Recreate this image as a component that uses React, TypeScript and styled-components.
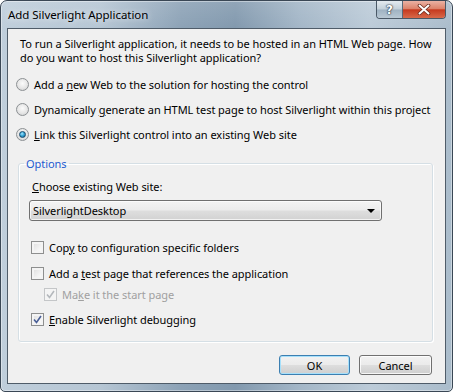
import React from "react";
import styled, { createGlobalStyle } from "styled-components";

const FONT = `"Noto Sans", "Open Sans", sans-serif`;

const GlobalStyle = createGlobalStyle`
  html, body {
    margin: 0;
    padding: 0;
    background: #ffffff;
  }
  body {
    font-family: ${FONT};
    font-size: 11px;
    letter-spacing: -0.05px;
    color: #000;
    white-space: nowrap;
  }
`;

const Window = styled.div`
  width: 453px;
  height: 392px;
  box-sizing: border-box;
  border: 1px solid #3a4755;
  border-radius: 7px 7px 5px 5px;
  background:
    linear-gradient(180deg, rgba(255,255,255,0.12) 0px, rgba(255,255,255,0) 28px),
    linear-gradient(90deg, #bfcedb 0%, #b6c6d4 22%, #8ca2b6 40%, #8299ae 52%, #a3b6c7 66%, #bccbd8 82%, #aabccb 100%);
  display: flex;
  flex-direction: column;
  overflow: hidden;
  box-shadow: inset 0 0 0 1px rgba(255,255,255,0.4);
`;

const TitleBar = styled.div`
  height: 27px;
  display: flex;
  align-items: flex-start;
  padding-left: 7px;
`;

const TitleText = styled.div`
  margin-top: 6px;
  line-height: 15px;
  font-size: 11.5px;
  color: #000;
  text-shadow: 0 0 6px rgba(255,255,255,0.9);
`;

const CaptionGroup = styled.div`
  display: flex;
  margin-left: auto;
  margin-right: 6px;
  height: 17px;
  border: 1px solid #4a5866;
  border-top: none;
  border-radius: 0 0 4px 4px;
  overflow: hidden;
`;

const HelpButton = styled.div`
  width: 25px;
  display: flex;
  align-items: center;
  justify-content: center;
  border-right: 1px solid #5b6977;
  background: linear-gradient(180deg, #e4eaef 0%, #c3d0da 48%, #9fb2c2 52%, #b9c8d4 100%);
  color: #fff;
  font-family: "DejaVu Sans", sans-serif;
  font-weight: bold;
  font-size: 12px;
  line-height: 1;
  text-shadow: 0 0 1px #2e3b48, 0 0 1px #2e3b48, 0 0 2px #2e3b48;
`;

const CloseButton = styled.div`
  width: 42px;
  display: flex;
  align-items: center;
  justify-content: center;
  background: linear-gradient(180deg, #eab2a4 0%, #dc836b 45%, #c63a1f 52%, #d8694a 100%);
`;

const Client = styled.div`
  flex: 1;
  margin: 0 6px 7px 6px;
  box-sizing: border-box;
  border: 1px solid #4f5c69;
  background: #f0f0f0;
  display: flex;
  flex-direction: column;
`;

const Intro = styled.div`
  padding: 8px 12px 0 12px;
  line-height: 14px;
`;

const OptionList = styled.div`
  margin-top: 7px;
  padding-left: 8px;
  display: flex;
  flex-direction: column;
`;

const RadioRow = styled.div`
  height: 25px;
  display: flex;
  align-items: center;
  gap: 5px;
`;

const Radio = styled.span<{ $checked?: boolean }>`
  width: 13px;
  height: 13px;
  box-sizing: border-box;
  border-radius: 50%;
  border: 1px solid #8c9093;
  background: radial-gradient(circle at 50% 40%, #fbfbfb 0%, #e6e6e6 55%, #c9cacb 100%);
  display: flex;
  align-items: center;
  justify-content: center;
  flex-shrink: 0;

  &::after {
    content: "";
    display: ${p => (p.$checked ? "block" : "none")};
    width: 5px;
    height: 5px;
    border-radius: 50%;
    border: 1px solid #184a6c;
    background: radial-gradient(circle at 40% 35%, #a8e6ff 0%, #3aa8d8 45%, #0b5b8c 100%);
  }
`;

const Key = styled.span`
  text-decoration: underline;
`;

const Group = styled.fieldset`
  margin: 9px 12px 0 10px;
  padding: 0;
  height: 186px;
  box-sizing: border-box;
  border: 1px solid #d5dfe5;
  border-radius: 3px;
  box-shadow: inset 1px 1px 0 #ffffff, 1px 1px 0 #ffffff;
  min-width: 0;
`;

const Legend = styled.legend`
  margin-left: 5px;
  padding: 0 2px;
  line-height: 15px;
  color: #1c5bd1;
`;

const GroupBody = styled.div`
  padding-left: 10px;
  display: flex;
  flex-direction: column;
`;

const FieldLabel = styled.div`
  margin-top: 8px;
  margin-left: 3px;
  line-height: 15px;
`;

const Combo = styled.div`
  margin-top: 6px;
  width: 353px;
  height: 21px;
  box-sizing: border-box;
  border: 1px solid #707070;
  border-radius: 3px;
  background: linear-gradient(180deg, #f4f4f4 0%, #ececec 48%, #dedede 52%, #d2d2d2 100%);
  box-shadow: inset 0 0 0 1px rgba(255,255,255,0.7);
  display: flex;
  align-items: center;
  padding: 0 6px 0 3px;
`;

const ComboText = styled.span`
  flex: 1;
`;

const Arrow = styled.span`
  width: 0;
  height: 0;
  border-left: 4px solid transparent;
  border-right: 4px solid transparent;
  border-top: 4px solid #000;
`;

const CheckRow = styled.div<{ $top: number; $indent?: number; $disabled?: boolean }>`
  margin-top: ${p => p.$top}px;
  margin-left: ${p => 2 + (p.$indent || 0)}px;
  height: 20px;
  display: flex;
  align-items: center;
  gap: 5px;
  color: ${p => (p.$disabled ? "#a0a0a0" : "#000")};
`;

const Box = styled.span<{ $disabled?: boolean }>`
  width: 13px;
  height: 13px;
  box-sizing: border-box;
  border: 1px solid ${p => (p.$disabled ? "#c4c6c8" : "#8e8f8f")};
  background: ${p => (p.$disabled ? "#f4f4f4" : "linear-gradient(135deg, #dcdcdc 0%, #f6f6f6 70%, #ffffff 100%)")};
  box-shadow: inset 0 0 0 2px #f4f4f4;
  display: flex;
  align-items: center;
  justify-content: center;
  flex-shrink: 0;
`;

const Footer = styled.div`
  margin-top: 13px;
  padding-right: 13px;
  display: flex;
  justify-content: flex-end;
  gap: 9px;
`;

const Button = styled.div<{ $default?: boolean; $w: number }>`
  width: ${p => p.$w}px;
  height: 20px;
  box-sizing: border-box;
  border: 1px solid ${p => (p.$default ? "#3c7fb1" : "#707070")};
  border-radius: 3px;
  background: linear-gradient(180deg, #f2f2f2 0%, #ebebeb 48%, #dddddd 52%, #cfcfcf 100%);
  box-shadow: inset 0 0 0 1px ${p => (p.$default ? "#a6e0fb" : "rgba(255,255,255,0.8)")};
  display: flex;
  align-items: center;
  justify-content: center;
  line-height: 1;
`;

const Check = ({ disabled }: { disabled?: boolean }) => (
  <svg width="9" height="9" viewBox="0 0 9 9">
    <path
      d="M1 4.5 L3.5 7.5 L8 1"
      fill="none"
      stroke={disabled ? "#b4b8bc" : "#4a5f97"}
      strokeWidth="1.6"
    />
  </svg>
);

const CloseGlyph = () => (
  <svg width="14" height="11" viewBox="0 0 14 11">
    <path d="M2.5 1.5 L11.5 9.5 M11.5 1.5 L2.5 9.5" stroke="#6b2a1c" strokeWidth="3.6" strokeLinecap="round" />
    <path d="M2.5 1.5 L11.5 9.5 M11.5 1.5 L2.5 9.5" stroke="#ffffff" strokeWidth="2" strokeLinecap="round" />
  </svg>
);

export default function App() {
  return (
    <>
      <GlobalStyle />
      <Window>
        <TitleBar>
          <TitleText>Add Silverlight Application</TitleText>
          <CaptionGroup>
            <HelpButton>?</HelpButton>
            <CloseButton>
              <CloseGlyph />
            </CloseButton>
          </CaptionGroup>
        </TitleBar>
        <Client>
          <Intro>
            To run a Silverlight application, it needs to be hosted in an HTML Web page. How
            <br />
            do you want to host this Silverlight application?
          </Intro>
          <OptionList>
            <RadioRow>
              <Radio />
              <span>
                Add a <Key>n</Key>ew Web to the solution for hosting the control
              </span>
            </RadioRow>
            <RadioRow>
              <Radio />
              <span>
                Dynamically <Key>g</Key>enerate an HTML test page to host Silverlight within this project
              </span>
            </RadioRow>
            <RadioRow>
              <Radio $checked />
              <span>
                <Key>L</Key>ink this Silverlight control into an existing Web site
              </span>
            </RadioRow>
          </OptionList>
          <Group>
            <Legend>Options</Legend>
            <GroupBody>
              <FieldLabel>
                <Key>C</Key>hoose existing Web site:
              </FieldLabel>
              <Combo>
                <ComboText>SilverlightDesktop</ComboText>
                <Arrow />
              </Combo>
              <CheckRow $top={16}>
                <Box />
                <span>
                  Cop<Key>y</Key> to configuration specific folders
                </span>
              </CheckRow>
              <CheckRow $top={6}>
                <Box />
                <span>
                  Add a <Key>t</Key>est page that references the application
                </span>
              </CheckRow>
              <CheckRow $top={1} $indent={13} $disabled>
                <Box $disabled>
                  <Check disabled />
                </Box>
                <span>
                  Ma<Key>k</Key>e it the start page
                </span>
              </CheckRow>
              <CheckRow $top={5}>
                <Box>
                  <Check />
                </Box>
                <span>
                  <Key>E</Key>nable Silverlight debugging
                </span>
              </CheckRow>
            </GroupBody>
          </Group>
          <Footer>
            <Button $default $w={71}>OK</Button>
            <Button $w={73}>Cancel</Button>
          </Footer>
        </Client>
      </Window>
    </>
  );
}
